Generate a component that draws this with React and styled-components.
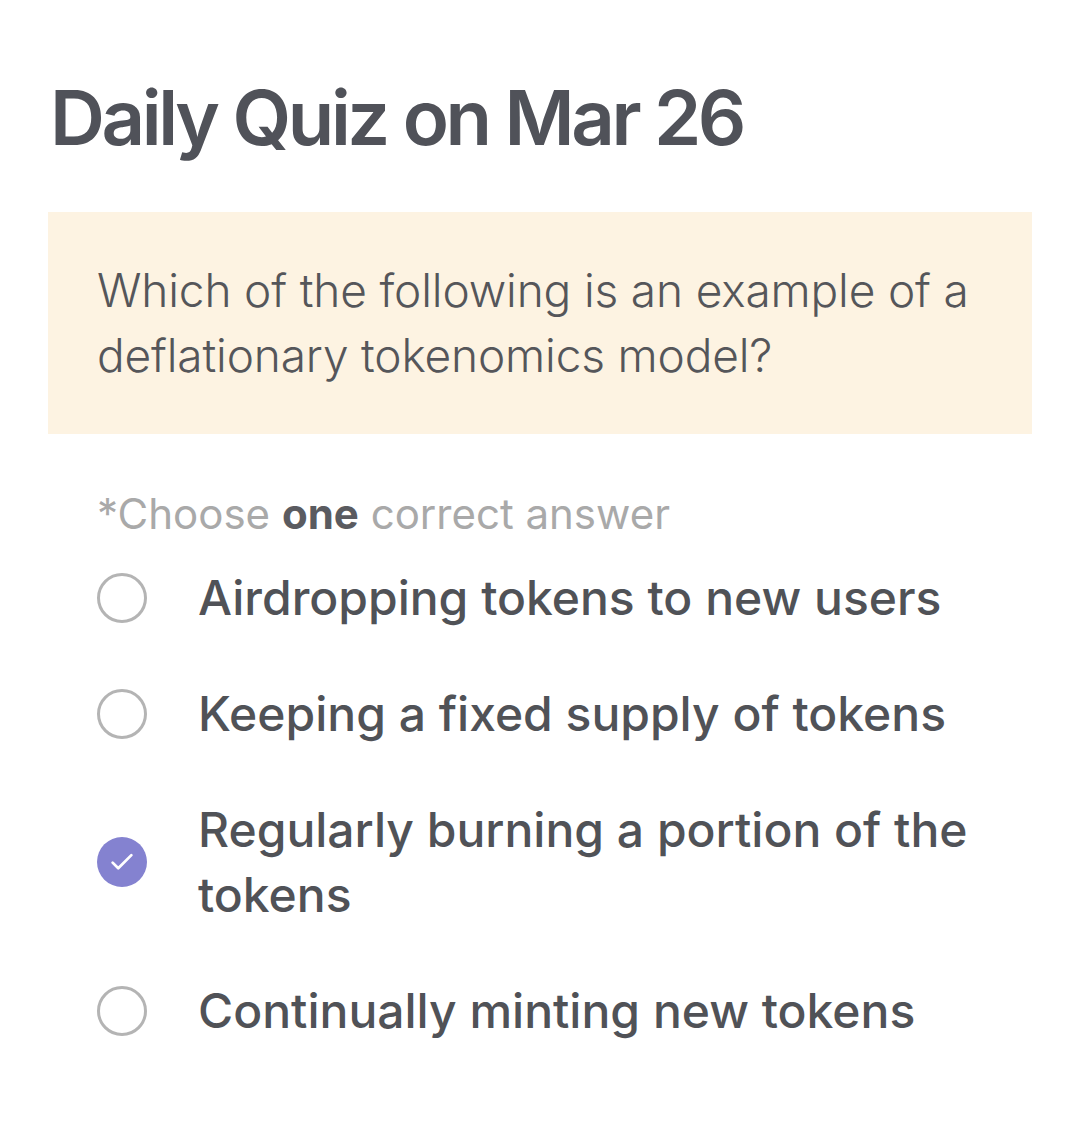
import React from 'react';
import styled, { createGlobalStyle } from 'styled-components';

const GlobalStyle = createGlobalStyle`
  body {
    margin: 0;
    background: #ffffff;
    font-family: Inter, "Noto Sans", sans-serif;
  }
`;

const Page = styled.div`
  padding: 79px 48px 60px 48px;
`;

const Title = styled.h1`
  margin: 0 0 57px 2px;
  font-size: 76px;
  line-height: 76px;
  font-weight: 600;
  letter-spacing: -3.4px;
  color: #505259;
`;

const QuestionBox = styled.div`
  background: #fdf3e2;
  padding: 46px 40px 46px 49px;
`;

const QuestionText = styled.p`
  margin: 0;
  font-size: 46px;
  line-height: 65px;
  font-weight: 300;
  letter-spacing: -0.15px;
  color: #55565a;
`;

const Hint = styled.div`
  margin: 55px 0 26px 49px;
  font-size: 42px;
  line-height: 50px;
  color: #a9a9a9;

  b {
    font-weight: 700;
    color: #5a5b60;
  }
`;

const Options = styled.div`
  display: flex;
  flex-direction: column;
  gap: 51px;
  padding-left: 49px;
`;

const Row = styled.label`
  display: flex;
  align-items: center;
  gap: 51px;
`;

const Radio = styled.span`
  flex: none;
  width: 50px;
  height: 50px;
  box-sizing: border-box;
  border-radius: 50%;
  border: ${p => (p.checked ? 'none' : '3px solid #b4b4b4')};
  background: ${p => (p.checked ? '#8482d0' : 'transparent')};
  display: flex;
  align-items: center;
  justify-content: center;
`;

const OptionText = styled.span`
  font-size: 48px;
  line-height: 65px;
  font-weight: 500;
  letter-spacing: 0px;
  color: #505257;
  max-width: 800px;
`;

const options = [
  { text: 'Airdropping tokens to new users' },
  { text: 'Keeping a fixed supply of tokens' },
  { text: 'Regularly burning a portion of the tokens', checked: true },
  { text: 'Continually minting new tokens' },
];

const Check = () => (
  <svg width="30" height="30" viewBox="0 0 24 24" fill="none" stroke="#ffffff" strokeWidth="2.2" strokeLinecap="round" strokeLinejoin="round">
    <path d="M4.5 12.5l4.5 4.5L19.5 6.5" />
  </svg>
);

export default function App() {
  return (
    <>
      <GlobalStyle />
      <Page>
        <Title>Daily Quiz on Mar 26</Title>
        <QuestionBox>
          <QuestionText>
            Which of the following is an example of a deflationary tokenomics model?
          </QuestionText>
        </QuestionBox>
        <Hint>
          *Choose <b>one</b> correct answer
        </Hint>
        <Options>
          {options.map(o => (
            <Row key={o.text}>
              <Radio checked={o.checked}>{o.checked && <Check />}</Radio>
              <OptionText>{o.text}</OptionText>
            </Row>
          ))}
        </Options>
      </Page>
    </>
  );
}
